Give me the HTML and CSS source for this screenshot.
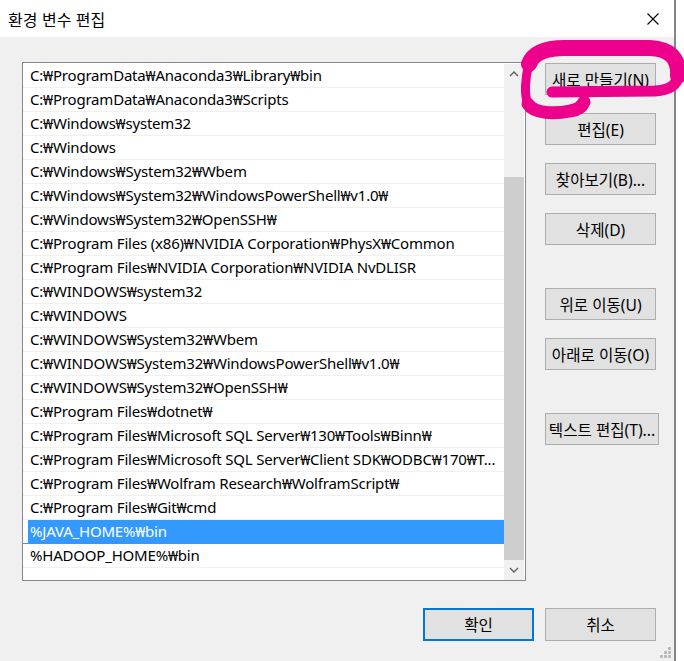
FILE: index.html
```html
<!DOCTYPE html>
<html lang="ko">
<head>
<meta charset="utf-8">
<title>환경 변수 편집</title>
<link rel="stylesheet" href="styles.css">
</head>
<body>
<div class="window">
  <div class="titlebar">
    <span class="title">환경 변수 편집</span>
    <span class="close"><svg width="12" height="12" viewBox="0 0 12 12"><path d="M0.5 0.5 L11.5 11.5 M11.5 0.5 L0.5 11.5" stroke="#000" stroke-width="1.1" fill="none"/></svg></span>
  </div>
  <div class="client">
    <div class="body">
      <div class="list">
        <div class="rows">
          <div class="row"><span class="label">C:₩ProgramData₩Anaconda3₩Library₩bin</span></div>
          <div class="row"><span class="label">C:₩ProgramData₩Anaconda3₩Scripts</span></div>
          <div class="row"><span class="label">C:₩Windows₩system32</span></div>
          <div class="row"><span class="label">C:₩Windows</span></div>
          <div class="row"><span class="label">C:₩Windows₩System32₩Wbem</span></div>
          <div class="row"><span class="label">C:₩Windows₩System32₩WindowsPowerShell₩v1.0₩</span></div>
          <div class="row"><span class="label">C:₩Windows₩System32₩OpenSSH₩</span></div>
          <div class="row"><span class="label">C:₩Program Files (x86)₩NVIDIA Corporation₩PhysX₩Common</span></div>
          <div class="row"><span class="label">C:₩Program Files₩NVIDIA Corporation₩NVIDIA NvDLISR</span></div>
          <div class="row"><span class="label">C:₩WINDOWS₩system32</span></div>
          <div class="row"><span class="label">C:₩WINDOWS</span></div>
          <div class="row"><span class="label">C:₩WINDOWS₩System32₩Wbem</span></div>
          <div class="row"><span class="label">C:₩WINDOWS₩System32₩WindowsPowerShell₩v1.0₩</span></div>
          <div class="row"><span class="label">C:₩WINDOWS₩System32₩OpenSSH₩</span></div>
          <div class="row"><span class="label">C:₩Program Files₩dotnet₩</span></div>
          <div class="row"><span class="label">C:₩Program Files₩Microsoft SQL Server₩130₩Tools₩Binn₩</span></div>
          <div class="row"><span class="label">C:₩Program Files₩Microsoft SQL Server₩Client SDK₩ODBC₩170₩T...</span></div>
          <div class="row"><span class="label">C:₩Program Files₩Wolfram Research₩WolframScript₩</span></div>
          <div class="row"><span class="label">C:₩Program Files₩Git₩cmd</span></div>
          <div class="row sel"><span class="label">%JAVA_HOME%₩bin</span></div>
          <div class="row"><span class="label">%HADOOP_HOME%₩bin</span></div>
        </div>
        <div class="scrollbar">
          <div class="sb-btn"><svg width="10" height="6" viewBox="0 0 10 6"><polyline points="1,5 5,1 9,5" fill="none" stroke="#606060" stroke-width="1.4"/></svg></div>
          <div class="sb-track"><div class="sb-thumb"></div></div>
          <div class="sb-btn"><svg width="10" height="6" viewBox="0 0 10 6"><polyline points="1,1 5,5 9,1" fill="none" stroke="#606060" stroke-width="1.4"/></svg></div>
        </div>
      </div>
      <div class="side">
        <button class="btn">새로 만들기(N)</button>
        <button class="btn gap-s">편집(E)</button>
        <button class="btn gap-s">찾아보기(B)...</button>
        <button class="btn gap-s">삭제(D)</button>
        <button class="btn gap-l">위로 이동(U)</button>
        <button class="btn gap-s">아래로 이동(O)</button>
        <button class="btn gap-l wide">텍스트 편집(T)...</button>
      </div>
    </div>
    <div class="footer">
      <button class="btn foot default">확인</button>
      <button class="btn foot">취소</button>
    </div>
  </div>
  <div class="grip">
    <span class="dot d1"></span><span class="dot d2"></span><span class="dot d3"></span>
    <span class="dot d4"></span><span class="dot d5"></span><span class="dot d6"></span>
  </div>
</div>
<svg class="annotation" width="684" height="661" viewBox="0 0 684 661">
  <g fill="none" stroke="#ec008c" stroke-linecap="round" stroke-linejoin="round">
    <path d="M 552 92 L 655 91 C 670 90 677 85 678 76" stroke-width="11"/>
    <path d="M 678 76 C 679 58 670 49 650 48 L 565 48 C 545 48 533 53 529 64" stroke-width="16"/>
    <path d="M 529 64 C 525 78 524 95 528 104" stroke-width="9"/>
    <path d="M 528 104 C 534 114 555 114 570 111 C 578 110 582 107 584 102" stroke-width="13"/>
  </g>
</svg>
</body>
</html>
```
FILE: styles.css
```css
html, body {
  margin: 0;
  padding: 0;
}
body {
  width: 684px;
  height: 661px;
  overflow: hidden;
  background: #ffffff;
  font-family: "Noto Sans", "Noto Sans CJK KR", sans-serif;
  font-size: 15px;
  color: #000;
  position: relative;
}
.window {
  width: 674px;
  height: 661px;
  border-right: 2px solid #858585;
  display: flex;
  flex-direction: column;
  position: relative;
}
.titlebar {
  height: 37px;
  flex: none;
  background: #fff;
  display: flex;
  align-items: center;
  justify-content: space-between;
  padding: 0 15px 0 8px;
}
.title {
  font-family: "Noto Sans CJK KR", sans-serif;
  font-size: 16px;
  line-height: 20px;
}
.close {
  display: flex;
  width: 12px;
  height: 12px;
}
.client {
  flex: 1;
  background: #f0f0f0;
  padding: 25px 0 0 22px;
}
.body {
  display: flex;
  align-items: flex-start;
  gap: 19px;
}
.list {
  width: 504px;
  height: 519px;
  box-sizing: border-box;
  border: 1px solid #828790;
  background: #fff;
  padding: 1px 1px 0 0;
  display: flex;
}
.rows {
  width: 481px;
  display: flex;
  flex-direction: column;
}
.row {
  height: 24px;
  box-sizing: border-box;
  border-bottom: 1px solid #f0f0f0;
  padding-left: 5px;
  display: flex;
}
.label {
  flex: 1;
  line-height: 23px;
  padding-left: 2px;
  white-space: nowrap;
  overflow: hidden;
  letter-spacing: -0.2px;
}
.row.sel {
  border-bottom-color: #3399ff;
}
.row.sel .label {
  background: #3399ff;
  color: #fff;
}
.scrollbar {
  width: 20px;
  background: #f0f0f0;
  display: flex;
  flex-direction: column;
}
.sb-btn {
  height: 20px;
  flex: none;
  display: flex;
  align-items: center;
  justify-content: center;
}
.sb-track {
  flex: 1;
  display: flex;
  flex-direction: column;
  justify-content: flex-end;
}
.sb-thumb {
  height: 383px;
  background: #cdcdcd;
}
.side {
  display: flex;
  flex-direction: column;
  padding-top: 1px;
}
.btn {
  width: 111px;
  height: 32px;
  box-sizing: border-box;
  border: 1px solid #adadad;
  background: #e1e1e1;
  font-family: "Noto Sans", "Noto Sans CJK KR", sans-serif;
  font-size: 15.6px;
  color: #000;
  padding: 0;
  margin: 0;
  display: flex;
  align-items: center;
  justify-content: center;
  white-space: nowrap;
}
.gap-s {
  margin-top: 18px;
}
.gap-l {
  margin-top: 43px;
}
.wide {
  width: 114px;
}
.footer {
  display: flex;
  gap: 11px;
  padding-left: 401px;
  margin-top: 27px;
}
.foot {
  height: 33px;
}
.default {
  border: 2px solid #0078d7;
}
.grip {
  position: absolute;
  right: 0;
  bottom: 0;
  width: 14px;
  height: 14px;
}
.dot {
  position: absolute;
  width: 3px;
  height: 3px;
  background: #bcbcbc;
}
.d1 { left: 8px; top: 0; }
.d2 { left: 4px; top: 4px; }
.d3 { left: 8px; top: 4px; }
.d4 { left: 0; top: 8px; }
.d5 { left: 4px; top: 8px; }
.d6 { left: 8px; top: 8px; }
.annotation {
  position: absolute;
  left: 0;
  top: 0;
  pointer-events: none;
}
```
